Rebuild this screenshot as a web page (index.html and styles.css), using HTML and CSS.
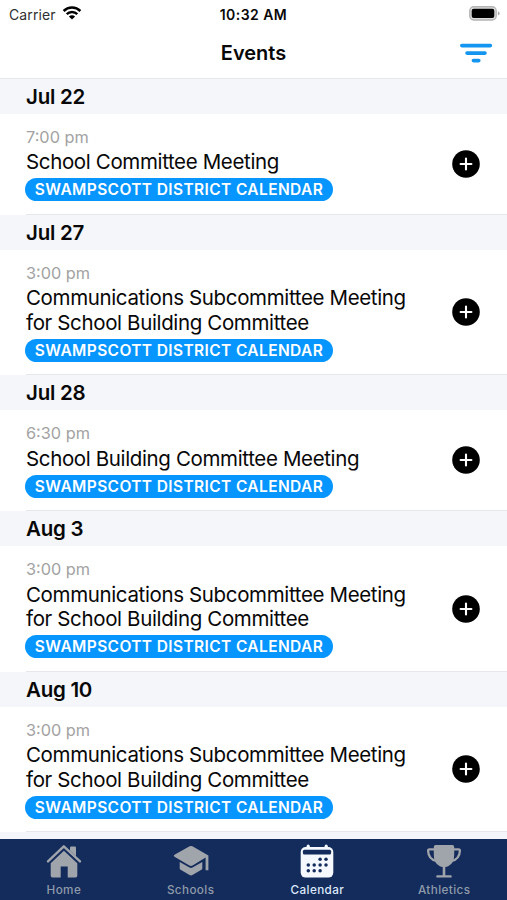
FILE: index.html
```html
<!DOCTYPE html>
<html lang="en">
<head>
<meta charset="utf-8">
<title>Events</title>
<link rel="stylesheet" href="styles.css">
</head>
<body>
<svg class="defs" width="0" height="0" aria-hidden="true">
  <symbol id="add" viewBox="0 0 28 28"><circle cx="14" cy="14" r="13.8"/><path d="M14 8.6v10.8M8.6 14h10.8" stroke="#fff" stroke-width="2.1" stroke-linecap="round"/></symbol>
</svg>
<div class="app">
  <div class="status">
    <div class="carrier"><span>Carrier</span>
      <svg width="20" height="14" viewBox="0 0 20 14" fill="none" stroke="#000" stroke-width="2.5"><path d="M1.6 5a12 12 0 0 1 16.8 0M4.7 8.2a7.6 7.6 0 0 1 10.6 0"/><path d="M10 13.6 6.9 10.5a4.4 4.4 0 0 1 6.2 0Z" fill="#000" stroke="none"/></svg>
    </div>
    <span class="clock">10:32 AM</span>
    <svg class="battery" width="31" height="15" viewBox="0 0 31 15"><rect x=".8" y=".8" width="26.4" height="13.2" rx="4" fill="#ddd" stroke="#b4b4b4" stroke-width="1.4"/><rect x="2.7" y="2.8" width="22.6" height="9.2" rx="2"/><path d="M28.9 5.3q1.7.6 1.7 2.1t-1.7 2.1z" fill="#aaa"/></svg>
  </div>
  <header class="nav">
    <h1>Events</h1>
    <svg class="filter" width="34" height="20" viewBox="0 0 34 20" stroke="#1495f0" stroke-width="3.6" stroke-linecap="round"><path d="M2.8 2.6h28.6M8 10.1h18M14.4 17.6h5.4"/></svg>
  </header>
  <main>
    <h2>Jul 22</h2>
    <article class="event"><div><time>7:00 pm</time><h3>School Committee Meeting</h3><span class="tag">SWAMPSCOTT DISTRICT CALENDAR</span></div><svg class="add"><use href="#add"/></svg></article>
    <h2>Jul 27</h2>
    <article class="event tall"><div><time>3:00 pm</time><h3>Communications Subcommittee Meeting<br>for School Building Committee</h3><span class="tag">SWAMPSCOTT DISTRICT CALENDAR</span></div><svg class="add"><use href="#add"/></svg></article>
    <h2>Jul 28</h2>
    <article class="event"><div><time>6:30 pm</time><h3>School Building Committee Meeting</h3><span class="tag">SWAMPSCOTT DISTRICT CALENDAR</span></div><svg class="add"><use href="#add"/></svg></article>
    <h2>Aug 3</h2>
    <article class="event tall"><div><time>3:00 pm</time><h3>Communications Subcommittee Meeting<br>for School Building Committee</h3><span class="tag">SWAMPSCOTT DISTRICT CALENDAR</span></div><svg class="add"><use href="#add"/></svg></article>
    <h2>Aug 10</h2>
    <article class="event tall"><div><time>3:00 pm</time><h3>Communications Subcommittee Meeting<br>for School Building Committee</h3><span class="tag">SWAMPSCOTT DISTRICT CALENDAR</span></div><svg class="add"><use href="#add"/></svg></article>
    <div class="next"></div>
  </main>
  <nav class="tabs">
    <div class="tab"><svg width="36" height="34" viewBox="0 0 36 34"><path d="M24 3.6q0-1 1-1h4q1 0 1 1v8.6l-6-5.6z"/><path d="M2 17.4 17.8 2.3 34 17.4" fill="none" stroke="#a0a4ab" stroke-width="2.4" stroke-linecap="round" stroke-linejoin="round"/><path d="M4.7 19.2 17.9 6.8l13.4 12.4v12.6q0 1.8-1.8 1.8h-7.8V22.4h-7v11.2H6.5q-1.8 0-1.8-1.8z"/></svg><span>Home</span></div>
    <div class="tab"><svg width="36" height="34" viewBox="0 0 36 34"><path d="M16.6 2.3q1.4-.7 2.8 0L35.4 11.5v14.8h-2.8V13.6l-13 8q-1.6.9-3.2 0L1.5 12.8q-1.5-1 0-2z"/><path d="M6.7 18 16.5 23.5q1.5.8 3 0l9.8-5.5v6.3q0 1-.9 1.5l-9 5.2q-1.4.8-2.8 0l-9-5.2q-.9-.5-.9-1.5z"/></svg><span>Schools</span></div>
    <div class="tab active"><svg width="36" height="34" viewBox="0 0 36 34"><rect x="7.6" y=".6" width="3.2" height="7" rx="1.6"/><rect x="25.6" y=".6" width="3.2" height="7" rx="1.6"/><rect x="1.7" y="3.1" width="32.6" height="30.5" rx="5"/><rect x="3.9" y="5.8" width="28.2" height="4.6" rx="1.5" fill="#142c5c"/><g fill="#142c5c"><circle cx="21.1" cy="15.2" r="1.75"/><circle cx="27" cy="15.2" r="1.75"/><circle cx="9.3" cy="21" r="1.75"/><circle cx="15.2" cy="21" r="1.75"/><circle cx="21.1" cy="21" r="1.75"/><circle cx="27" cy="21" r="1.75"/><circle cx="9.3" cy="26.8" r="1.75"/><circle cx="15.2" cy="26.8" r="1.75"/><circle cx="21.1" cy="26.8" r="1.75"/></g></svg><span>Calendar</span></div>
    <div class="tab"><svg width="36" height="34" viewBox="0 0 36 34"><path d="M9.5 1h17q1.5 0 1.7 1.8v8q0 8.6-5.7 11.1-1.4.7-3.2 1.1v8.2h5.3q1.2 0 1.2 1.2t-1.2 1.2H11.4q-1.2 0-1.2-1.2t1.2-1.2h5.3V23q-1.8-.4-3.2-1.1-5.7-2.5-5.7-11.1v-8Q8 1 9.5 1z"/><path d="M8.5 5.4H3.4q-1.4 0-1.3 1.4c.2 5 3 9 8.2 10.2M27.5 5.4h5.1q1.4 0 1.3 1.4c-.2 5-3 9-8.2 10.2" fill="none" stroke="#a0a4ab" stroke-width="2.3"/></svg><span>Athletics</span></div>
  </nav>
</div>
</body>
</html>
```

FILE: styles.css
```css
* { box-sizing: border-box; }
body { margin: 0; background: #fff; font-family: Inter, "Liberation Sans", sans-serif; color: #080808; }
h1, h2, h3 { margin: 0; }
.defs { display: none; }
.app { width: 507px; height: 900px; display: flex; flex-direction: column; overflow: hidden; }
.status { height: 28px; flex: none; display: grid; grid-template-columns: 1fr auto 1fr; align-items: center; padding: 0 7px; }
.carrier { display: flex; align-items: center; gap: 6px; padding-left: 2px; font-size: 14px; letter-spacing: .1px; color: #303030; }
.carrier svg { margin-top: -2px; }
.clock { font-size: 14px; font-weight: 600; letter-spacing: .45px; }
.battery { justify-self: end; margin-top: -2px; }
.nav { height: 50.5px; flex: none; border-bottom: 1px solid #e6e8eb; display: grid; grid-template-columns: 1fr auto 1fr; align-items: center; padding: 0 14px; }
.nav h1 { grid-column: 2; font-size: 20px; line-height: 24px; font-weight: 600; letter-spacing: 0; }
.filter { justify-self: end; }
main { flex: 1; min-height: 0; overflow: hidden; }
h2 { height: 35px; padding-left: 26px; background: #f4f6fa; font-size: 20.5px; line-height: 36px; font-weight: 600; letter-spacing: -.25px; }
.event { height: 101px; margin-left: 26px; padding: 13px 27px 0 0; border-bottom: 1px solid #e6e7ea; display: flex; justify-content: space-between; }
.event.tall { height: 125.5px; }
.event time { display: block; font-size: 16.3px; line-height: 20px; color: #a2a2a2; }
h3 { font-size: 20.5px; line-height: 24.5px; font-weight: 400; letter-spacing: -.36px; margin-top: 3.5px; white-space: nowrap; }
.tag { display: block; width: 308px; height: 23px; margin: 3.5px 0 0 -1px; border-radius: 12px; background: #0795ff; color: #fff; font-size: 15.5px; line-height: 23px; font-weight: 600; text-align: center; letter-spacing: .38px; white-space: nowrap; }
.add { width: 28px; height: 28px; flex: none; align-self: center; margin-top: -12.5px; }
.next { height: 8px; background: #f4f6fa; }
.tabs { height: 61.5px; flex: none; background: #142c5c; display: grid; grid-template-columns: repeat(4, 1fr); padding-top: 5.5px; }
.tab { display: flex; flex-direction: column; align-items: center; color: #8f9baa; fill: #a0a4ab; font-size: 11.7px; line-height: 14px; font-weight: 500; letter-spacing: .4px; padding-left: 1px; }
.tab span { margin-top: 4.5px; }
.tab.active { color: #dce9fa; fill: #f5f9ff; }
```
